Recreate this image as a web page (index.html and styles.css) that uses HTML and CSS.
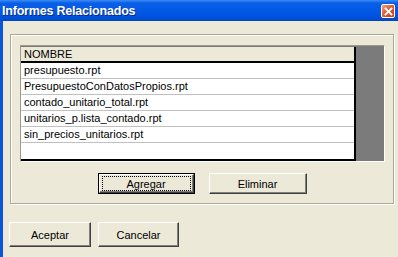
FILE: index.html
```html
<!DOCTYPE html>
<html lang="es">
<head>
  <meta charset="UTF-8">
  <title>Informes Relacionados</title>
  <link rel="stylesheet" href="styles.css">
</head>
<body>

  <!-- WINDOW: dialog with title bar and body -->
  <div class="window">
    <div class="titlebar">
      <span class="title">Informes Relacionados</span>
      <span class="close">
        <svg width="9" height="9" viewBox="0 0 9 9">
          <path d="M1.5 1.5 L7.5 7.5 M7.5 1.5 L1.5 7.5" stroke="#fff" stroke-width="1.8" stroke-linecap="square"/>
        </svg>
      </span>
    </div>

    <div class="content">
      <!-- FRAME: grid with the reports -->
      <div class="frame">
        <div class="grid">
          <div class="table">
            <div class="head">NOMBRE</div>
            <div class="row">presupuesto.rpt</div>
            <div class="row">PresupuestoConDatosPropios.rpt</div>
            <div class="row">contado_unitario_total.rpt</div>
            <div class="row">unitarios_p.lista_contado.rpt</div>
            <div class="row">sin_precios_unitarios.rpt</div>
            <div class="row last"></div>
          </div>
        </div>
        <div class="frame-buttons">
          <button class="btn btn-default btn-add"><span class="focus">Agregar</span></button>
          <button class="btn btn-del">Eliminar</button>
        </div>
      </div>

      <div class="dialog-buttons">
        <button class="btn btn-ok">Aceptar</button>
        <button class="btn btn-cancel">Cancelar</button>
      </div>
    </div>
  </div>

</body>
</html>
```

FILE: styles.css
```css
/* BODY: the whole dialog */
body {
  margin: 0;
  width: 398px;
  height: 257px;
  overflow: hidden;
  background: #ece9d8;
  font-family: "Liberation Sans", Arial, sans-serif;
  font-size: 11px;
}

.window {
  display: flex;
  flex-direction: column;
  height: 257px;
}

/* TITLE BAR */
.titlebar {
  height: 21px;
  flex: none;
  display: flex;
  align-items: center;
  justify-content: space-between;
  padding: 0 3px 0 2px;
  background: linear-gradient(#3a8cf5 0px, #0a5fe6 3px, #0058e6 12px, #0050d8 18px, #0046c0 21px);
}

.title {
  color: #fff;
  font-weight: bold;
  font-size: 12.5px;
  letter-spacing: -0.2px;
  text-shadow: 1px 1px 0 #0a2c8a;
}

.close {
  width: 12px;
  height: 12px;
  margin-top: 1px;
  border: 1px solid #fff;
  border-radius: 2px;
  background: linear-gradient(135deg, #f0a080, #e0582e 50%, #c83c18);
  display: flex;
  align-items: center;
  justify-content: center;
}

/* CONTENT */
.content {
  flex: 1;
  border-left: 3px solid #0b55d8;
  padding: 13px 0 0 6px;
}

/* FRAME: etched group box */
.frame {
  width: 382px;
  height: 168px;
  margin-left: 1px;
  border: 1px solid #aca899;
  box-shadow: inset 1px 1px 0 #fff, 1px 1px 0 #fff;
  padding: 10px 0 0 9px;
  box-sizing: border-box;
  width: 384px;
  height: 170px;
}

/* GRID */
.grid {
  width: 365px;
  height: 117px;
  box-sizing: border-box;
  background: #7b7b7b;
  border: 1px solid;
  border-color: #9d9a8c #fff #fff #9d9a8c;
  padding: 1px 0 0 0;
}

.table {
  width: 333px;
  height: 112px;
  background: #fff;
  border-right: 2px solid #000;
  border-bottom: 2px solid #000;
  display: flex;
  flex-direction: column;
}

.head {
  height: 14px;
  line-height: 14px;
  padding-left: 3px;
  background: #ece9d8;
  border-bottom: 2px solid #000;
  color: #000;
}

.row {
  height: 15px;
  line-height: 15px;
  padding-left: 3px;
  border-bottom: 1px solid #c0c0c0;
  color: #000;
}

.row.last {
  flex: 1;
  border-bottom: none;
}

/* BUTTONS */
.frame-buttons {
  display: flex;
  justify-content: center;
  gap: 14px;
  margin: 11px 0 0 -9px;
}

.btn {
  font-family: "Liberation Sans", Arial, sans-serif;
  font-size: 11px;
  color: #000;
  background: #ece9d8;
  border: 1px solid;
  border-color: #fff #404040 #404040 #fff;
  box-shadow: inset -1px -1px 0 #808080;
  padding: 0;
  box-sizing: border-box;
  display: flex;
  align-items: center;
  justify-content: center;
}

.btn-default {
  outline: 1px solid #000;
}

.btn-add {
  width: 95px;
  height: 19px;
  margin: 1px;
}

.focus {
  display: flex;
  align-items: center;
  justify-content: center;
  width: 87px;
  height: 13px;
  border: 1px dotted #000;
}

.btn-del {
  width: 98px;
  height: 21px;
}

.dialog-buttons {
  display: flex;
  gap: 7px;
  margin-top: 18px;
}

.btn-ok {
  width: 82px;
  height: 25px;
}

.btn-cancel {
  width: 81px;
  height: 25px;
}
```
